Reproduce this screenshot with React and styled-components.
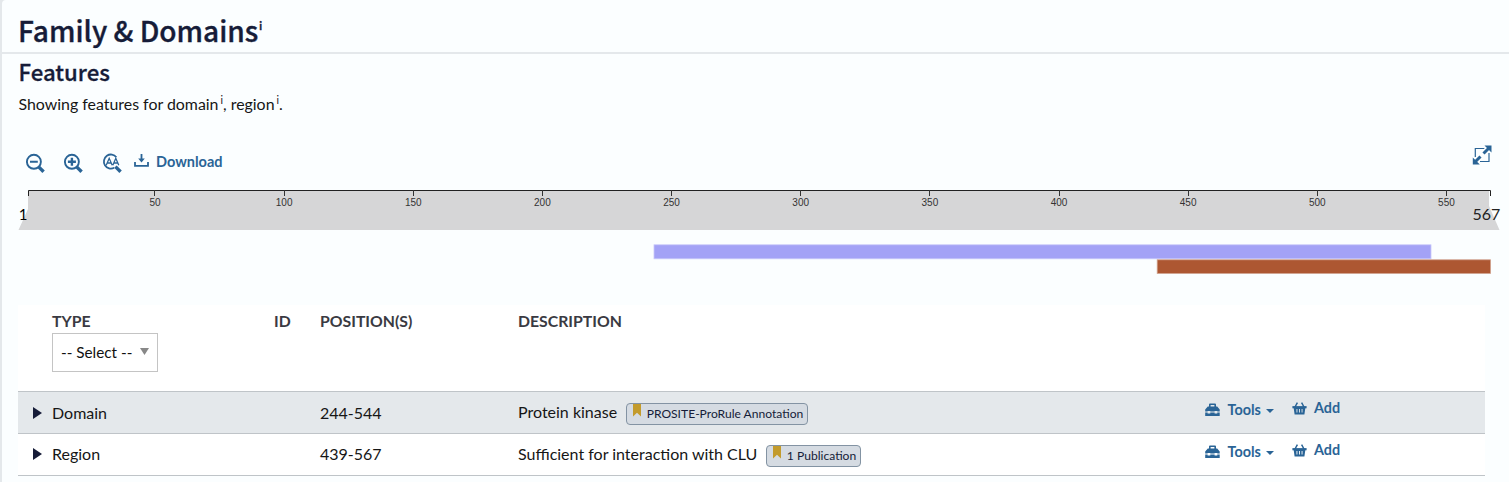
import React from "react";
import styled, { createGlobalStyle } from "styled-components";

const GlobalStyle = createGlobalStyle`
  * { box-sizing: border-box; }
  body {
    margin: 0;
    background: #e4e8eb;
    font-family: Lato, sans-serif;
    font-size: 16px;
    color: #161616;
    overflow: hidden;
  }
`;

const Card = styled.section`
  margin-left: 2px;
  height: 482px;
  overflow: hidden;
  background: #fbfeff;
  border-top-left-radius: 4px;
`;

const CardHeader = styled.header`
  height: 54px;
  padding: 8px 0 0 16px;
  border-bottom: 2px solid #e4e8eb;
`;

const Title = styled.h2`
  margin: 0;
  display: flex;
  font: 500 28.1px/44px "Noto Sans CJK SC", sans-serif;
  -webkit-text-stroke: 0.35px #161c38;
  color: #161c38;
`;

const Subtitle = styled.h3`
  margin: 0;
  height: 38px;
  padding-left: 16.5px;
  font: 500 22.2px/34px "Noto Sans CJK SC", sans-serif;
  -webkit-text-stroke: 0.3px #161c38;
  color: #161c38;
`;

const Info = styled.span`
  font: ${(p) => (p.$strong ? 700 : 400)} ${(p) => (p.$strong ? "11px" : "10.5px")}/12px Lato, sans-serif;
  margin-left: ${(p) => (p.$strong ? "1px" : "2px")};
  position: relative;
  top: ${(p) => p.$top || "-6px"};
`;

const Intro = styled.p`
  margin: 0;
  height: 24px;
  padding-left: 16.5px;
  font-size: 15.9px;
  line-height: 24px;
  white-space: nowrap;
`;

const Toolbar = styled.div`
  display: flex;
  height: 40px;
  margin-top: 28px;
  padding: 0 17px 0 23px;
  color: #2a6496;
`;

const IconButton = styled.button`
  display: block;
  border: 0;
  background: none;
  color: inherit;
  padding: 0;
  width: 20px;
  height: 20px;
  margin: ${(p) => p.$margin || "9px 18px 0 0"};
  svg { display: block; }
`;

const Download = styled.button`
  display: flex;
  gap: 7px;
  border: 0;
  background: none;
  padding: 0;
  margin: 9px auto 0 0;
  height: 18px;
  font: 700 14.5px/18px Lato, sans-serif;
  color: inherit;
`;

const Track = styled.svg`
  display: block;
  width: 1507px;
  height: 101px;
`;

const Table = styled.div`
  width: 1467px;
  margin: 20px 0 0 16px;
  background: #fff;
`;

const Row = styled.div`
  display: grid;
  grid-template-columns: 34px 222px 46px 198px 687px 87px 1fr;
  height: ${(p) => (p.$head ? "87px" : "42px")};
  border-bottom: 1px solid #bfc4c8;
  background: ${(p) => (p.$shaded ? "#e4e8eb" : "#fff")};
`;

const HeadCell = styled.div`
  padding-top: 6px;
  font-weight: 700;
  font-size: 15.8px;
  line-height: 20px;
  color: #3a3a42;
`;

const Cell = styled.div`
  display: flex;
  padding-top: ${(p) => p.$top || "9px"};
  line-height: 24px;
  white-space: nowrap;
`;

const Select = styled.div`
  display: flex;
  align-items: center;
  justify-content: space-between;
  width: 106px;
  height: 39px;
  margin-top: 2px;
  padding: 0 8px 2px;
  border: 1px solid #c4c4c4;
  background: #fff;
  color: #111;
  font-weight: 400;
  font-size: 15.3px;
`;

const Expander = styled.span`
  width: 0;
  height: 0;
  margin: 6px 0 0 15px;
  border: solid transparent;
  border-width: 6px 0 6px 9px;
  border-left-color: #161c38;
`;

const Evidence = styled.span`
  display: flex;
  height: 22px;
  margin: ${(p) => p.$top} 0 0 8.5px;
  padding: 0 4px 0 6px;
  border: 1px solid #8393a3;
  border-radius: 4px;
  background: #d5dbe2;
  font-size: 12.1px;
  line-height: 20px;
  color: #161c38;
  svg { margin-right: 6px; }
`;

const Action = styled.button`
  display: flex;
  align-items: flex-start;
  border: 0;
  padding: 0;
  background: none;
  font: 700 14.4px/18px Lato, sans-serif;
  color: #2a6496;
  svg { margin: ${(p) => p.$icon || "2px 7.5px 0 0"}; }
`;

const Caret = styled.i`
  margin: 8px 0 0 5px;
  border: solid transparent;
  border-width: 4px 4px 0;
  border-top-color: #2a6496;
`;

function Magnifier({ children, open }) {
  return (
    <svg width="20" height="20" viewBox="0 0 20 20" fill="none" stroke="currentColor">
      {open ? (
        <path d="M14.4 4.2A7 7 0 1 0 12.2 14.7" strokeWidth="1.8" />
      ) : (
        <circle cx="8.9" cy="8.8" r="7" strokeWidth="1.9" />
      )}
      <path d="M13.4 13.6l5.2 5.2" strokeWidth="3.4" />
      {children}
    </svg>
  );
}

function Toolbox() {
  return (
    <svg width="15" height="14" viewBox="0 0 15 14" fill="currentColor">
      <path fillRule="evenodd" d="M4 3.6V1.6Q4 .6 5 .6h5q1 0 1 1v2h1.2l2.5 2.8v2.2h-2.4V8H9.6v.6H5.3V8H2.6v.6H.2V6.4l2.6-2.8zM5.6 2.1v1.5h3.8V2.1z" />
      <path d="M.2 9.5h2.4v1h2.7v-1h4.3v1h2.7v-1h2.4V13H.2z" />
    </svg>
  );
}

function Basket() {
  return (
    <svg width="15" height="13" viewBox="0 0 15 13" fill="none" stroke="currentColor">
      <path d="M3 5L5.4.7M12 5L9.6.7" strokeWidth="1.5" />
      <path d="M.4 5.2h14.2" strokeWidth="2.2" />
      <path d="M1.6 5.5h11.8l-1 7H2.6zM4.5 7v3.6h.9V7zM7 7v3.6h.9V7zM9.6 7v3.6h.9V7z" fill="currentColor" fillRule="evenodd" stroke="none" />
    </svg>
  );
}

const SCALE = 2.583;
const position = (residue) => 26.4 + (residue - 1) * SCALE;
const TICKS = [50, 100, 150, 200, 250, 300, 350, 400, 450, 500, 550];

function FeatureTrack() {
  return (
    <Track viewBox="0 0 1507 101">
      <path d="M26 6H1487V22L1497.5 46H16.5L26 25z" fill="#d6d6d7" />
      <path d="M26.5 12V6.5H1488.5V12" fill="none" stroke="#222" />
      {TICKS.map((tick) => (
        <g key={tick}>
          <path d={`M${Math.floor(position(tick)) + 0.5} 6v6`} stroke="#333" />
          <text x={position(tick)} y="22" textAnchor="middle" fontFamily="Liberation Sans" fontSize="10" fill="#333">
            {tick}
          </text>
        </g>
      ))}
      <text x="25.5" y="36" textAnchor="end" fontSize="15" fill="#000">1</text>
      <text x="1470.5" y="36" fontSize="16" fill="#222">567</text>
      <rect x="652" y="60.8" width="777" height="14" fill="#a3a2f6" stroke="#c9c9fa" strokeWidth=".8" />
      <rect x="1155.2" y="75.8" width="333.3" height="13.6" fill="#ad5732" stroke="#cfa08b" strokeWidth=".8" />
    </Track>
  );
}

const FEATURES = [
  { type: "Domain", range: "244-544", text: "Protein kinase", evidence: "PROSITE-ProRule Annotation", shaded: true },
  { type: "Region", range: "439-567", text: "Sufficient for interaction with CLU", evidence: "1 Publication" },
];

function FeatureRow({ feature }) {
  const top = feature.shaded ? "9px" : "8px";
  return (
    <Row $shaded={feature.shaded}>
      <Cell $top={top}><Expander /></Cell>
      <Cell $top={top}>{feature.type}</Cell>
      <Cell />
      <Cell $top={top}>{feature.range}</Cell>
      <Cell $top="8px">
        {feature.text}
        <Evidence $top="3px">
          <svg width="8" height="13" viewBox="0 0 8 13"><path d="M0 0h8v12.5L4 8.8 0 12.5z" fill="#c39b2c" /></svg>
          {feature.evidence}
        </Evidence>
      </Cell>
      <Cell $top="9px">
        <Action><Toolbox />Tools<Caret /></Action>
      </Cell>
      <Cell $top="7px">
        <Action $icon="3px 7px 0 0"><Basket />Add</Action>
      </Cell>
    </Row>
  );
}

export default function App() {
  return (
    <>
      <GlobalStyle />
      <Card>
        <CardHeader>
          <Title>Family &amp; Domains<Info $strong $top="12px">i</Info></Title>
        </CardHeader>
        <Subtitle>Features</Subtitle>
        <Intro>
          Showing features for domain<Info>i</Info>, region<Info>i</Info>.
        </Intro>
        <Toolbar>
          <IconButton aria-label="Zoom out"><Magnifier><path d="M5 8.8h7.8" strokeWidth="2" /></Magnifier></IconButton>
          <IconButton aria-label="Zoom in"><Magnifier><path d="M4.9 8.8h8M8.9 4.8v8" strokeWidth="2.4" /></Magnifier></IconButton>
          <IconButton aria-label="Zoom to sequence" $margin="9px 12px 0 1px">
            <Magnifier open><path d="M4.2 12.3l3-7 3 7M5.3 10h3.9M10.8 12.3l3-7 3 7M11.9 10h3.9" strokeWidth="1.3" /></Magnifier>
          </IconButton>
          <Download>
            <svg width="15" height="15" viewBox="0 0 15 15" fill="none" stroke="currentColor">
              <path d="M1 9v3.8h13V9M7.5 1v6" strokeWidth="1.8" />
              <path d="M4.2 5.4h6.6L7.5 9.4z" fill="currentColor" stroke="none" />
            </svg>
            Download
          </Download>
          <IconButton aria-label="Full screen" $margin="1px 0 0">
            <svg width="20" height="20" viewBox="0 0 20 20" fill="none" stroke="currentColor">
              <path d="M3.3 12V3.5h9M17 8v8.5H8" strokeWidth="1.2" />
              <path d="M11.5 8.5l5-5M8.5 11.5l-5 5" strokeWidth="3" />
              <path d="M12.5 .5h7v7zM.8 12.5v7h7z" fill="currentColor" stroke="none" />
            </svg>
          </IconButton>
        </Toolbar>
        <FeatureTrack />
        <Table>
          <Row $head>
            <HeadCell />
            <HeadCell>
              TYPE
              <Select>
                -- Select --
                <svg width="9" height="7" viewBox="0 0 9 7"><path d="M0 0h9L4.5 7z" fill="#888" /></svg>
              </Select>
            </HeadCell>
            <HeadCell>ID</HeadCell>
            <HeadCell>POSITION(S)</HeadCell>
            <HeadCell>DESCRIPTION</HeadCell>
          </Row>
          {FEATURES.map((feature) => (
            <FeatureRow key={feature.type} feature={feature} />
          ))}
        </Table>
      </Card>
    </>
  );
}
